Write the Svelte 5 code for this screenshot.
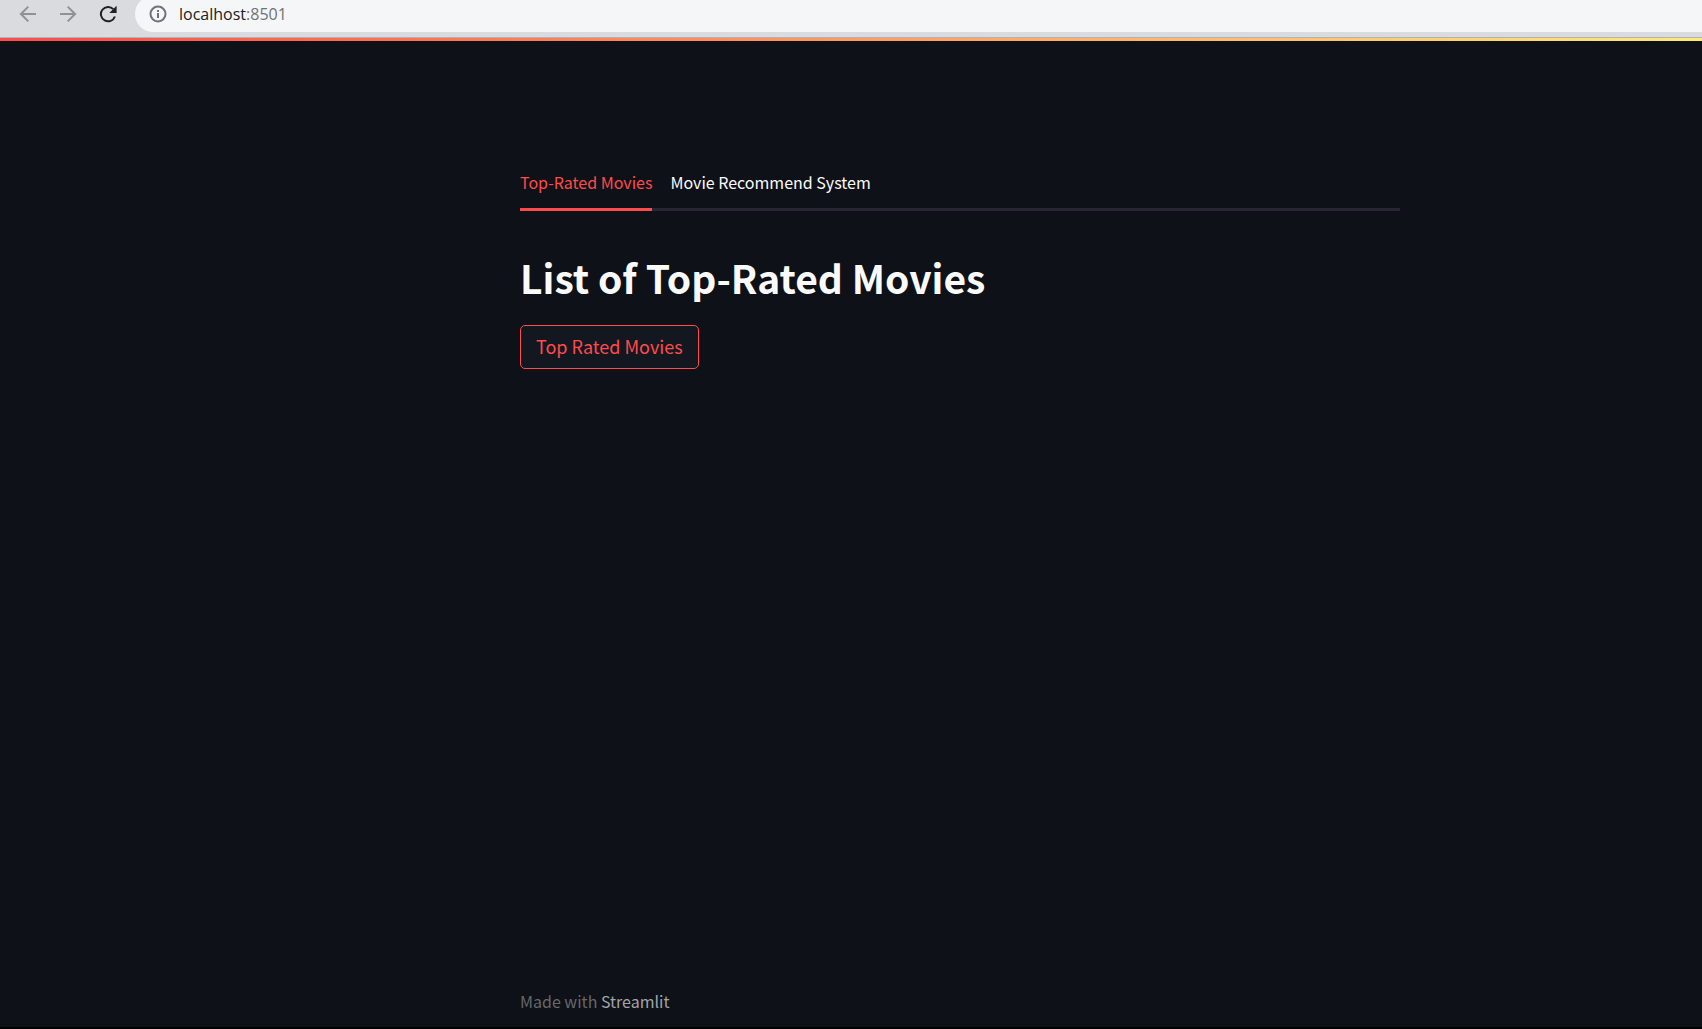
<script>
  let tab = $state(0);
  const tabs = ['Top-Rated Movies', 'Movie Recommend System'];
</script>

<div class="window">
  <header class="toolbar">
    <nav class="controls" aria-label="Browser">
      <button class="nav" aria-label="Back">
        <svg viewBox="0 0 18 18"><path d="M17 9H2.5M9.3 1.6L1.9 9l7.4 7.4" /></svg>
      </button>
      <button class="nav" aria-label="Forward">
        <svg viewBox="0 0 18 18"><path d="M1 9h14.500M8.700 1.600L16.100 9l-7.400 7.400" /></svg>
      </button>
      <button class="nav reload" aria-label="Reload">
        <svg viewBox="0 0 18 18">
          <path d="M14.3 4.1A7.2 7.2 0 1 0 15.9 11.5" />
          <path class="solid" d="M17.600 0.800v7.300h-7.300z" />
        </svg>
      </button>
    </nav>
    <div class="address">
      <svg class="info" viewBox="0 0 18 18" aria-hidden="true">
        <circle cx="9" cy="9" r="7.5" />
        <path d="M9 8v5M9 5v2" />
      </svg>
      <a href="http://localhost:8501">localhost<span>:8501</span></a>
    </div>
  </header>
  <div class="decoration"></div>

  <div class="page">
    <main>
      <div class="tabs" role="tablist">
        {#each tabs as name, i}
          <button role="tab" class="tab" class:active={tab === i} aria-selected={tab === i} onclick={() => (tab = i)}>{name}</button>
        {/each}
      </div>
      <h1>List of Top-Rated Movies</h1>
      <button class="action">Top Rated Movies</button>
    </main>
    <footer>Made with <a href="https://streamlit.io">Streamlit</a></footer>
  </div>
</div>

<style>
  :global(body) {
    background: #0e1117;
  }
  .window {
    box-sizing: border-box;
    min-height: 100vh;
    display: flex;
    flex-direction: column;
    border-bottom: 2px solid #000;
    background: #0e1117;
    color: #fafafa;
    font-family: "Noto Sans CJK SC", "Noto Sans", sans-serif;
  }
  button {
    font: inherit;
    color: inherit;
    background: none;
    border: 0;
    padding: 0;
    cursor: pointer;
  }
  a {
    color: inherit;
    text-decoration: none;
  }
  .toolbar {
    display: flex;
    height: 37px;
    overflow: hidden;
    background: #dadbdf;
    border-bottom: 1px solid #b2b3b7;
  }
  .controls {
    display: flex;
    gap: 22px;
    height: 28px;
    align-items: center;
    padding: 0 18px 0 19px;
  }
  .nav {
    display: flex;
    color: #8f9195;
  }
  .nav svg,
  .info {
    width: 18px;
    height: 18px;
    fill: none;
    stroke: currentColor;
    stroke-width: 2;
  }
  .reload {
    color: #202124;
  }
  .reload .solid {
    fill: currentColor;
    stroke: none;
  }
  .address {
    flex: 1;
    display: flex;
    align-items: center;
    gap: 12px;
    height: 36px;
    margin-top: -4px;
    padding: 0 14px;
    background: #f5f6f8;
    border-radius: 18px 0 0 18px;
    color: #202124;
    font-family: "Open Sans", sans-serif;
    font-size: 16px;
    line-height: 28px;
  }
  .address span,
  .info {
    color: #6f7276;
  }
  .decoration {
    height: 3px;
    background: linear-gradient(90deg, #ff4b4b, #fffd80 113%);
  }
  .page {
    flex: 1;
    display: grid;
    grid-template-columns: minmax(24px, 520fr) minmax(0, 880px) minmax(24px, 302fr);
    grid-template-rows: 1fr auto;
  }
  main {
    grid-column: 2;
    padding-top: 120px;
  }
  .tabs {
    display: flex;
    gap: 18px;
    box-shadow: inset 0 -3px #262730;
  }
  .tab {
    height: 50px;
    padding-bottom: 8px;
    font-size: 16px;
    line-height: 24px;
  }
  .tab.active {
    color: #ff4b4b;
    box-shadow: inset 0 -3px #ff4b4b;
  }
  h1 {
    margin: 39px 0 21px;
    font-size: 39px;
    line-height: 54px;
    font-weight: 700;
  }
  .action {
    height: 44px;
    padding: 0 15px 2px;
    border: 1px solid #ff4b4b;
    border-radius: 5px;
    background: #131720;
    color: #ff4b4b;
    font-size: 18px;
    line-height: 28px;
  }
  footer {
    grid-column: 2;
    padding: 12px 0 14px;
    color: #66686c;
    font-size: 16px;
    line-height: 24px;
  }
  footer a {
    color: #a3a5a8;
  }
</style>
